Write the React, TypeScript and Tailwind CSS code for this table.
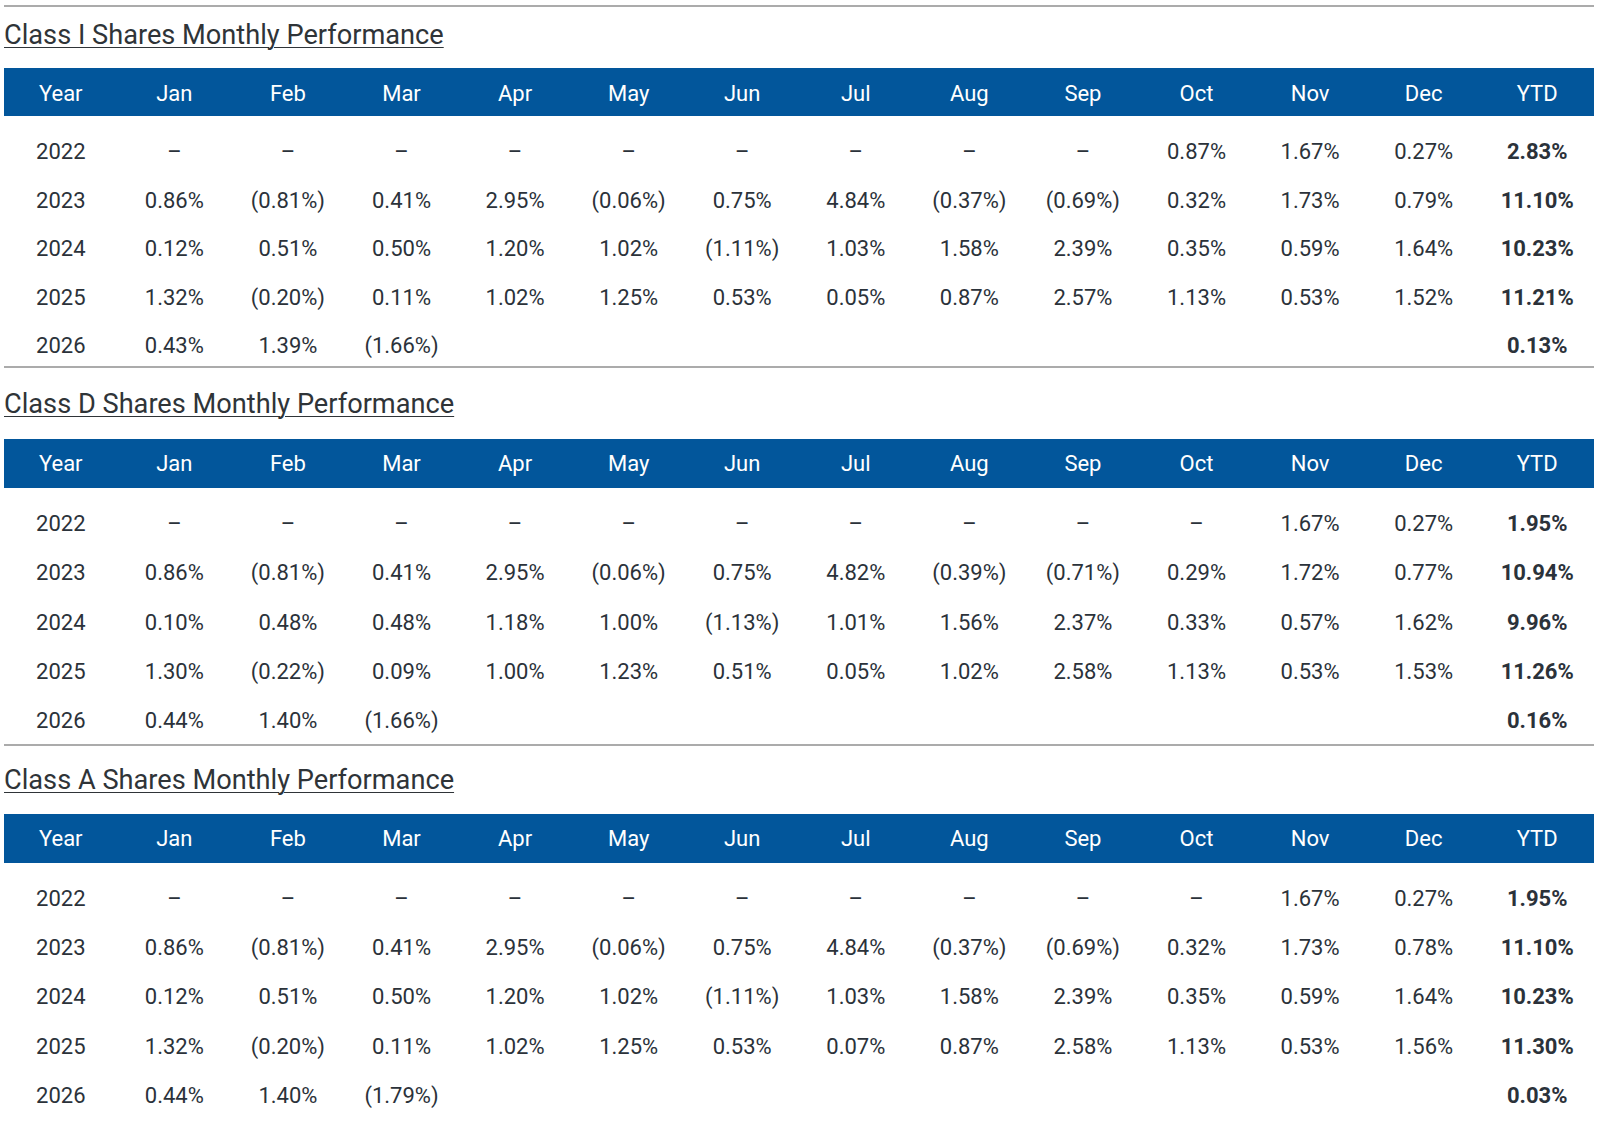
const MONTHS = ["Year", "Jan", "Feb", "Mar", "Apr", "May", "Jun", "Jul", "Aug", "Sep", "Oct", "Nov", "Dec", "YTD"];

type Row = { year: string; values: string[]; ytd: string };

const D = "–";

const classI: Row[] = [
  { year: "2022", values: [D, D, D, D, D, D, D, D, D, "0.87%", "1.67%", "0.27%"], ytd: "2.83%" },
  { year: "2023", values: ["0.86%", "(0.81%)", "0.41%", "2.95%", "(0.06%)", "0.75%", "4.84%", "(0.37%)", "(0.69%)", "0.32%", "1.73%", "0.79%"], ytd: "11.10%" },
  { year: "2024", values: ["0.12%", "0.51%", "0.50%", "1.20%", "1.02%", "(1.11%)", "1.03%", "1.58%", "2.39%", "0.35%", "0.59%", "1.64%"], ytd: "10.23%" },
  { year: "2025", values: ["1.32%", "(0.20%)", "0.11%", "1.02%", "1.25%", "0.53%", "0.05%", "0.87%", "2.57%", "1.13%", "0.53%", "1.52%"], ytd: "11.21%" },
  { year: "2026", values: ["0.43%", "1.39%", "(1.66%)", "", "", "", "", "", "", "", "", ""], ytd: "0.13%" },
];

const classD: Row[] = [
  { year: "2022", values: [D, D, D, D, D, D, D, D, D, D, "1.67%", "0.27%"], ytd: "1.95%" },
  { year: "2023", values: ["0.86%", "(0.81%)", "0.41%", "2.95%", "(0.06%)", "0.75%", "4.82%", "(0.39%)", "(0.71%)", "0.29%", "1.72%", "0.77%"], ytd: "10.94%" },
  { year: "2024", values: ["0.10%", "0.48%", "0.48%", "1.18%", "1.00%", "(1.13%)", "1.01%", "1.56%", "2.37%", "0.33%", "0.57%", "1.62%"], ytd: "9.96%" },
  { year: "2025", values: ["1.30%", "(0.22%)", "0.09%", "1.00%", "1.23%", "0.51%", "0.05%", "1.02%", "2.58%", "1.13%", "0.53%", "1.53%"], ytd: "11.26%" },
  { year: "2026", values: ["0.44%", "1.40%", "(1.66%)", "", "", "", "", "", "", "", "", ""], ytd: "0.16%" },
];

const classA: Row[] = [
  { year: "2022", values: [D, D, D, D, D, D, D, D, D, D, "1.67%", "0.27%"], ytd: "1.95%" },
  { year: "2023", values: ["0.86%", "(0.81%)", "0.41%", "2.95%", "(0.06%)", "0.75%", "4.84%", "(0.37%)", "(0.69%)", "0.32%", "1.73%", "0.78%"], ytd: "11.10%" },
  { year: "2024", values: ["0.12%", "0.51%", "0.50%", "1.20%", "1.02%", "(1.11%)", "1.03%", "1.58%", "2.39%", "0.35%", "0.59%", "1.64%"], ytd: "10.23%" },
  { year: "2025", values: ["1.32%", "(0.20%)", "0.11%", "1.02%", "1.25%", "0.53%", "0.07%", "0.87%", "2.58%", "1.13%", "0.53%", "1.56%"], ytd: "11.30%" },
  { year: "2026", values: ["0.44%", "1.40%", "(1.79%)", "", "", "", "", "", "", "", "", ""], ytd: "0.03%" },
];

type Spacing = {
  title: string;
  header: string;
  headerCell: string;
  body: string;
  row: string;
  cell: string;
};

// spacing differs a little between the three blocks in the original page
const SPACING: Spacing[] = [
  { title: "mt-[12px]", header: "mt-[17px] h-[48px]", headerCell: "pt-[4px]", body: "pt-[7px]", row: "h-[48.5px]", cell: "pt-[10px]" },
  { title: "mt-[20px]", header: "mt-[19px] h-[49px]", headerCell: "pt-[2px]", body: "pt-[10px]", row: "h-[49.3px]", cell: "pt-[4px]" },
  { title: "mt-[18px]", header: "mt-[18px] h-[49px]", headerCell: "pt-[2px]", body: "pt-[9px]", row: "h-[49.3px]", cell: "pt-[4px]" },
];

function PerformanceSection({ title, rows, sp }: { title: string; rows: Row[]; sp: Spacing }) {
  return (
    <section>
      <div className="h-[2px] bg-[#ababab]" />
      <h2
        className={`${sp.title} text-[27.2px] leading-[32px] text-[#2f3438] underline decoration-1 underline-offset-[3px] font-normal`}
      >
        {title}
      </h2>
      <div className={`${sp.header} grid grid-cols-14 items-center bg-[#02569b] text-white`}>
        {MONTHS.map((m) => (
          <div key={m} className={`text-center text-[22px] leading-none ${sp.headerCell}`}>
            {m}
          </div>
        ))}
      </div>
      <div className={sp.body}>
        {rows.map((row) => (
          <div
            key={row.year}
            className={`${sp.row} grid grid-cols-14 items-center text-[22px] leading-none text-[#2b323a]`}
          >
            <div className={`text-center ${sp.cell}`}>{row.year}</div>
            {row.values.map((v, i) => (
              <div key={i} className={`text-center ${sp.cell}`}>
                {v}
              </div>
            ))}
            <div className={`text-center font-bold ${sp.cell}`}>{row.ytd}</div>
          </div>
        ))}
      </div>
    </section>
  );
}

export default function App() {
  return (
    <div className="min-h-screen bg-white px-1 pt-[5px] font-['Roboto','Liberation_Sans',sans-serif]">
      <PerformanceSection title="Class I Shares Monthly Performance" rows={classI} sp={SPACING[0]} />
      <PerformanceSection title="Class D Shares Monthly Performance" rows={classD} sp={SPACING[1]} />
      <PerformanceSection title="Class A Shares Monthly Performance" rows={classA} sp={SPACING[2]} />
    </div>
  );
}
